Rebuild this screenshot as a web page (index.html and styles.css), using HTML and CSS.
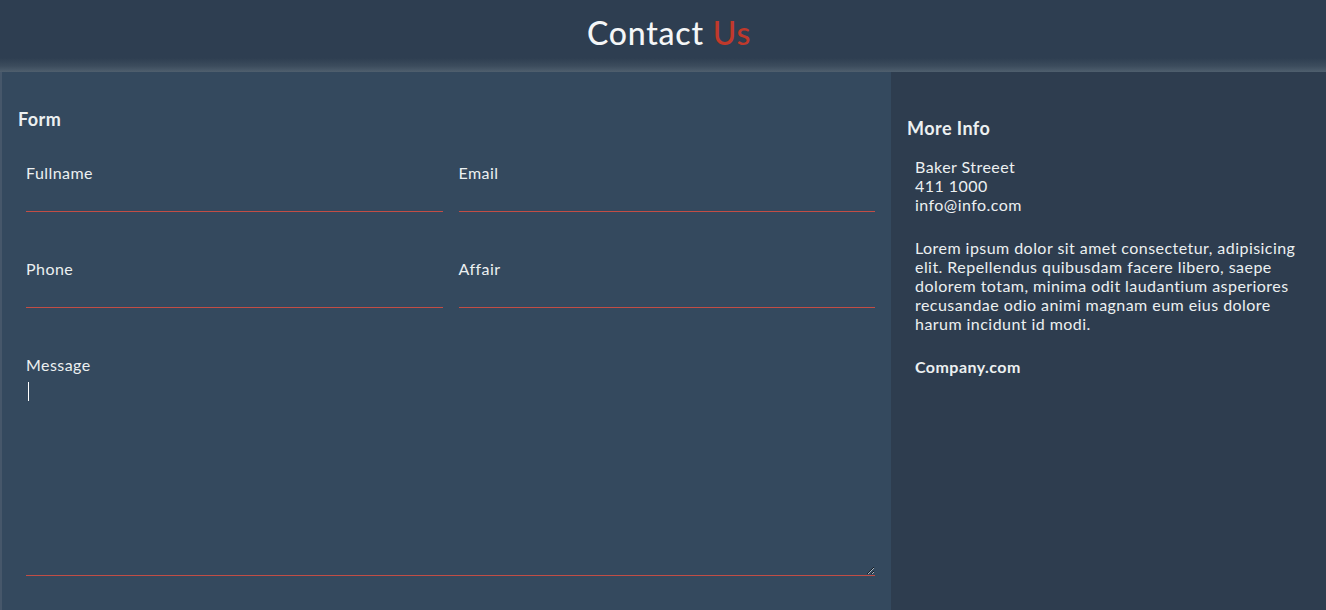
FILE: index.html
```html
<!DOCTYPE html>
<html lang="en">
<head>
<meta charset="utf-8">
<title>Contact Us</title>
<link rel="stylesheet" href="styles.css">
</head>
<body>
<header class="top">
  <h1 class="title">Contact <span class="accent">Us</span></h1>
</header>
<main class="wrap">
  <section class="form-panel">
    <h2 class="panel-title">Form</h2>
    <form class="grid">
      <div class="field">
        <label class="label" for="fullname">Fullname</label>
        <input class="input" id="fullname" type="text">
      </div>
      <div class="field">
        <label class="label" for="email">Email</label>
        <input class="input" id="email" type="email">
      </div>
      <div class="field">
        <label class="label" for="phone">Phone</label>
        <input class="input" id="phone" type="tel">
      </div>
      <div class="field">
        <label class="label" for="affair">Affair</label>
        <input class="input" id="affair" type="text">
      </div>
      <div class="field full">
        <label class="label" for="message">Message</label>
        <div class="area-wrap">
          <textarea class="area" id="message"></textarea>
          <span class="caret"></span>
        </div>
      </div>
    </form>
  </section>
  <aside class="info-panel">
    <h2 class="info-title">More Info</h2>
    <div class="info-body">
      <p class="address">Baker Streeet<br>411 1000<br>info@info.com</p>
      <p class="text">Lorem ipsum dolor sit amet consectetur, adipisicing elit. Repellendus quibusdam facere libero, saepe dolorem totam, minima odit laudantium asperiores recusandae odio animi magnam eum eius dolore harum incidunt id modi.</p>
      <p class="company">Company.com</p>
    </div>
  </aside>
</main>
</body>
</html>
```
FILE: styles.css
```css
* { box-sizing: border-box; }
html, body {
  margin: 0;
  padding: 0;
}
body {
  background: #34495e;
  color: #ecf0f1;
  font-family: "Lato", "Open Sans", sans-serif;
  font-size: 16px;
  line-height: 19px;
  letter-spacing: 0.45px;
}
.top {
  height: 72px;
  background: linear-gradient(to bottom, #2e3e51 0, #2e3e51 58px, #3c4c5d 66px, #4f5f6e 72px);
  display: flex;
  justify-content: center;
  align-items: center;
}
.title {
  margin: 0;
  font-size: 32px;
  font-weight: 500;
  line-height: 40px;
  letter-spacing: 0.8px;
  color: #f4f6f7;
  padding: 0 0 6px 12px;
}
.accent { color: #c0392b; }
.wrap {
  display: grid;
  grid-template-columns: 889px 1fr;
  border-left: 2px solid #46576a;
  min-height: 538px;
}
.form-panel {
  background: #34495e;
  padding: 36px 16px 34px 16px;
}
.panel-title {
  margin: 0;
  font-size: 18px;
  line-height: 22px;
  font-weight: 700;
}
.grid {
  margin: 33px 0 0 8px;
  display: grid;
  grid-template-columns: 1fr 1fr;
  column-gap: 16px;
  row-gap: 47px;
}
.field {
  display: flex;
  flex-direction: column;
}
.full { grid-column: 1 / -1; }
.label {
  font-size: 16px;
  line-height: 19px;
  color: #ecf0f1;
}
.input {
  height: 30px;
  border: 0;
  border-bottom: 1px solid #c24d45;
  background: transparent;
  color: #ecf0f1;
  font: inherit;
  padding: 0;
  outline: none;
}
.area-wrap {
  position: relative;
  display: flex;
}
.area {
  width: 100%;
  height: 202px;
  border: 0;
  border-bottom: 1px solid #c24d45;
  background: transparent;
  color: #ecf0f1;
  font: inherit;
  padding: 8px 2px;
  outline: none;
}
.caret {
  position: absolute;
  left: 2px;
  top: 8px;
  width: 1px;
  height: 19px;
  background: #ffffff;
}
.info-panel {
  background: #2e3d4f;
  padding: 45px 16px 16px 16px;
}
.info-title {
  margin: 0;
  font-size: 18px;
  line-height: 22px;
  font-weight: 700;
}
.info-body {
  padding: 0 8px;
  margin-top: 18px;
}
.info-body p {
  margin: 0 0 24px 0;
}
.company {
  font-weight: 700;
}
```
